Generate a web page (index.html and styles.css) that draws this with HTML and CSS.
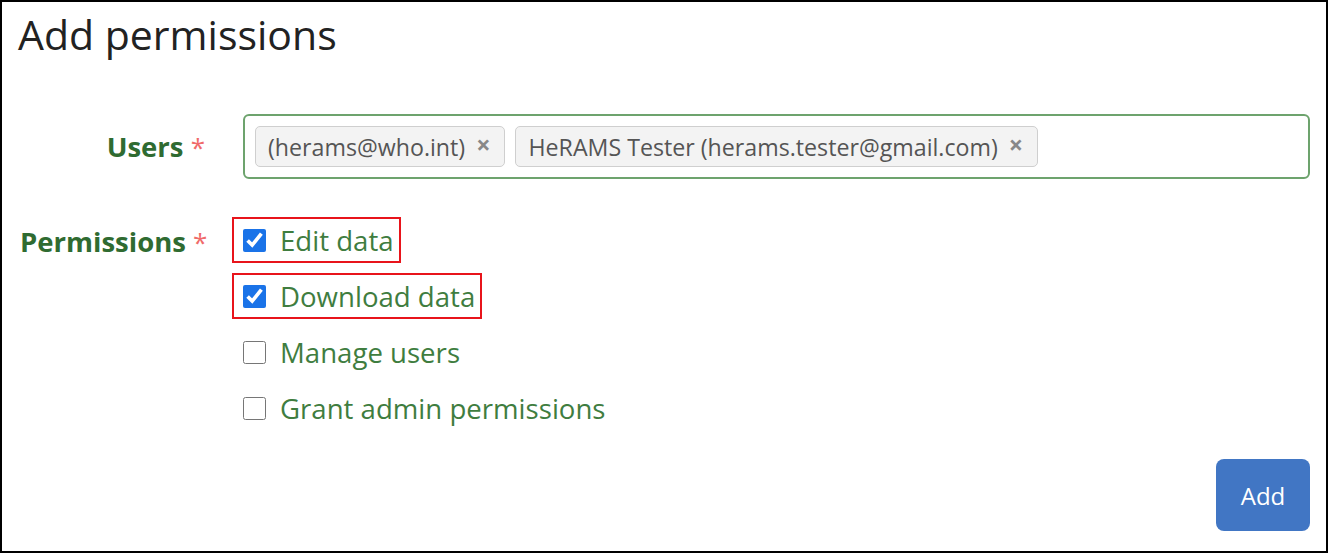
FILE: index.html
```html
<!DOCTYPE html>
<html lang="en">
<head>
<meta charset="utf-8">
<title>Add permissions</title>
<link rel="stylesheet" href="styles.css">
</head>
<body>
<div class="panel">
  <h1 class="title">Add permissions</h1>
  <form class="form">
    <div class="row row-users">
      <label class="label">Users <span class="req">*</span></label>
      <div class="field">
        <div class="tags-input">
          <span class="tag">(herams@who.int)<span class="tag-x">×</span></span>
          <span class="tag">HeRAMS Tester (herams.tester@gmail.com)<span class="tag-x">×</span></span>
        </div>
      </div>
    </div>
    <div class="row row-perms">
      <label class="label">Permissions <span class="req">*</span></label>
      <div class="field checks">
        <label class="check marked"><input type="checkbox" checked><span>Edit data</span></label>
        <label class="check marked"><input type="checkbox" checked><span>Download data</span></label>
        <label class="check"><input type="checkbox"><span>Manage users</span></label>
        <label class="check"><input type="checkbox"><span>Grant admin permissions</span></label>
      </div>
    </div>
    <div class="actions">
      <button type="button" class="btn">Add</button>
    </div>
  </form>
</div>
</body>
</html>
```

FILE: styles.css
```css
* { box-sizing: border-box; }
html, body { margin: 0; padding: 0; background: #fff; }
body { font-family: "Open Sans", Lato, sans-serif; }

.panel {
  width: 1328px;
  height: 553px;
  border: 2px solid #000;
  padding: 0 16px 0 16px;
  display: flex;
  flex-direction: column;
}

.title {
  margin: 6px 0 0 0;
  font-size: 41px;
  font-weight: 400;
  line-height: 52px;
  color: #222;
}

.form { display: flex; flex-direction: column; flex: 1; }

.row {
  display: grid;
  grid-template-columns: 187px 1fr;
  column-gap: 38px;
}
.row-users { margin-top: 54px; align-items: center; }
.row-perms { margin-top: 38px; align-items: start; }

.label {
  text-align: right;
  font-size: 27.5px;
  font-weight: 700;
  color: #2f6b31;
  white-space: nowrap;
}
.row-perms .label { text-align: left; margin-left: 2px; padding-top: 6px; }
.req { color: #f06a6a; font-weight: 400; font-size: 26px; }

.tags-input {
  height: 65px;
  border: 2px solid #6da36d;
  border-radius: 6px;
  display: flex;
  align-items: center;
  gap: 10px;
  padding: 0 10px;
}
.tag {
  display: inline-flex;
  align-items: center;
  height: 41px;
  padding: 0 14px 0 12px;
  background: #f3f3f3;
  border: 1px solid #cfcfcf;
  border-radius: 5px;
  font-size: 23.2px;
  color: #555;
  white-space: nowrap;
}
.tag-x {
  margin-left: 11px;
  font-weight: 700;
  color: #888;
  font-size: 25px;
  position: relative;
  top: -3px;
}

.checks { display: flex; flex-direction: column; gap: 10px; margin-left: -11px; }
.check {
  display: inline-flex;
  align-self: flex-start;
  align-items: center;
  height: 46px;
  padding: 0 5px 0 9px;
  border: 2px solid transparent;
  font-size: 27.6px;
  color: #3f7d3f;
}
.check.marked { border-color: #e8141b; }
.check input {
  width: 23px;
  height: 23px;
  margin: 0 14px 0 0;
  accent-color: #1a73e8;
}

.actions { display: flex; justify-content: flex-end; margin-top: auto; margin-bottom: 20px; }
.btn {
  width: 94px;
  height: 72px;
  border: none;
  border-radius: 8px;
  background: #4176c4;
  color: #fff;
  font-family: "Open Sans", sans-serif;
  font-size: 24px;
}
```
